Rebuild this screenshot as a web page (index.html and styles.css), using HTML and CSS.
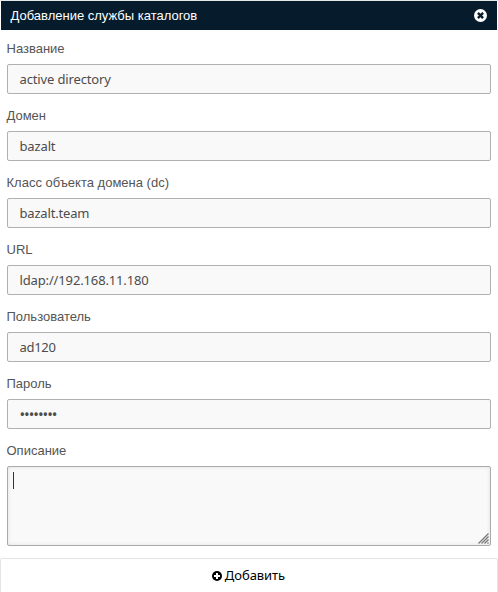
FILE: index.html
```html
<!DOCTYPE html>
<html lang="ru">
<head>
<meta charset="utf-8">
<title>Добавление службы каталогов</title>
<link rel="stylesheet" href="styles.css">
</head>
<body>
<form class="dialog">
  <header class="title">
    <span>Добавление службы каталогов</span>
    <svg class="close" viewBox="0 0 13 13"><circle cx="6.5" cy="6.5" r="6.5" fill="#fff"/><path d="M3.9 3.9l5.2 5.2M9.1 3.9L3.9 9.1" stroke="#061c2c" stroke-width="2.3"/></svg>
  </header>
  <main class="fields">
    <label class="field"><span class="label">Название</span><input class="input name" value="active directory"></label>
    <label class="field"><span class="label">Домен</span><input class="input domain" value="bazalt"></label>
    <label class="field"><span class="label">Класс объекта домена (dc)</span><input class="input dc" value="bazalt.team"></label>
    <label class="field"><span class="label">URL</span><input class="input url" value="ldap://192.168.11.180"></label>
    <label class="field"><span class="label">Пользователь</span><input class="input user" value="ad120"></label>
    <label class="field"><span class="label">Пароль</span><input class="input password" value="••••••••"></label>
    <div class="field"><span class="label">Описание</span>
      <div class="area"><i class="caret"></i>
        <svg class="grip" viewBox="0 0 11 11"><path d="M.5 10.5l10-10M3.5 10.5l7-7M6.5 10.5l4-4M9.5 10.5l1-1" stroke="#777" stroke-width="1.3"/></svg>
      </div>
    </div>
  </main>
  <button class="submit" type="button">
    <svg class="plus" viewBox="0 0 10 10"><circle cx="5" cy="5" r="5"/><path d="M5 2v6M2 5h6" stroke="#fff" stroke-width="2"/></svg>
    <span>Добавить</span>
  </button>
</form>
</body>
</html>
```
FILE: styles.css
```css
* { box-sizing: border-box; }
body { margin: 0; background: #fff; overflow: hidden; font: 13px/17px "Liberation Sans", sans-serif; color: #555; }
.dialog { height: 592px; display: flex; flex-direction: column; border-top: 1px solid #e5e8e8; }
.title { height: 29px; margin: 0 1px; padding: 0 10px 0 9.5px; display: flex; align-items: center; justify-content: space-between; background: #061c2c; color: #fff; }
.close { width: 13px; height: 13px; }
.fields { height: 528px; padding: 10px 7px 0; }
.field { display: block; height: 67px; }
.label { display: block; height: 17px; margin: 0 0 7px -0.5px; }
.input { display: block; width: 484px; height: 30px; padding: 0 11.5px; border: 1px solid #b0b0b0; border-radius: 2px; background: #f9f9f9; color: #4c4c4c; font: 13px "Noto Sans", sans-serif; letter-spacing: -0.14px; outline: 0; }
.dc { letter-spacing: -0.18px; }
.user { letter-spacing: -0.3px; }
.password { font-size: 15px; letter-spacing: -1.03px; }
.area { height: 80px; padding: 5px; display: flex; justify-content: space-between; border: 1px solid #aaa; border-radius: 2px; background: #f9f9f9; box-shadow: inset 0 0 4px #e2e2e2; }
.caret { width: 1px; height: 17px; background: #333; }
.grip { width: 11px; height: 11px; align-self: flex-end; margin: 0 -4px -4px 0; }
.submit { height: 34px; width: 498px; padding: 0 1px 0 0; display: flex; align-items: center; justify-content: center; gap: 3px; border: 1px solid #e5e5e5; border-bottom: 0; border-radius: 2px 2px 0 0; background: #fff; color: #000; font: 13px "Noto Sans", sans-serif; letter-spacing: -0.05px; }
.submit span { margin-top: -1px; }
.plus { width: 10px; height: 10px; }
```
